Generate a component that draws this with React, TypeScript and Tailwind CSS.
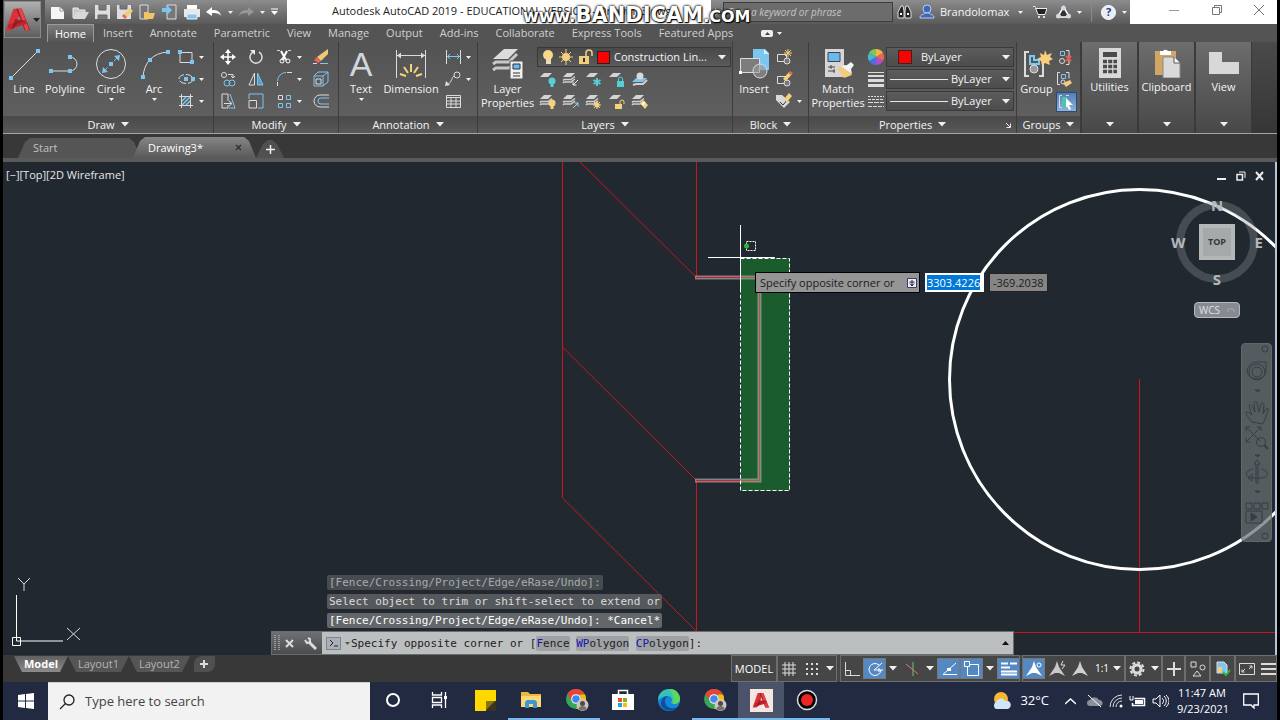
import { useEffect, useRef } from "react";
import type { ReactNode } from "react";

type Kids = { children?: ReactNode };

function Svg({ w = 18, h = 18, children }: Kids & { w?: number; h?: number }) {
  return (
    <svg
      width={w}
      height={h}
      viewBox={`0 0 ${w} ${h}`}
      fill="none"
      stroke="#dcdcdc"
      className="shrink-0"
      aria-hidden="true"
    >
      {children}
    </svg>
  );
}

function Caret() {
  return (
    <Svg w={8} h={5}>
      <path d="M0 0h8L4 4.500z" fill="#f0f0f0" stroke="none" />
    </Svg>
  );
}

function SmallCaret() {
  return (
    <Svg w={5} h={3}>
      <path d="M0 0h5L2.500 3z" fill="#f0f0f0" stroke="none" />
    </Svg>
  );
}

function Nodes({ at }: { at: number[][] }) {
  return (
    <g fill="#7cc6f2" stroke="none">
      {at.map(([x, y]) => (
        <rect key={`${x}-${y}`} x={x - 2} y={y - 2} width="4" height="4" />
      ))}
    </g>
  );
}

function AcadLogo({ size }: { size: number }) {
  return (
    <svg width={size} height={size} viewBox="0 0 30 30" aria-hidden="true">
      <path d="M9 3h9l-8 20-3 3H1z" fill="#d8323a" />
      <path d="M12 3h6l9 23h-6z" fill="#b01622" />
      <path d="M18 3l-4 0 8 23h4z" fill="#e0474c" />
      <path d="M3 20l18-5 3 4-20 6z" fill="#c2242e" />
      <path d="M7 25l4-11 10 2-8 3-4 5z" fill="#8e0f1b" opacity=".7" />
    </svg>
  );
}

/* ---------- ribbon building blocks ---------- */

function Panel({ title, width, corner, children }: Kids & { title: string; width: string; corner?: boolean }) {
  return (
    <section className={`${width} flex shrink-0 flex-col border-r border-[#3c3c3c] bg-gradient-to-b from-[#535353] to-[#626262]`}>
      <div className="flex h-[74px] pt-1">{children}</div>
      <div className="relative flex flex-1 items-center justify-center bg-gradient-to-b from-[#494949] to-[#585858]">
        <button type="button" className="flex items-center gap-1.5 text-[11px] leading-4 text-gray-100">
          {title}
          <Caret />
        </button>
        {corner && (
          <span className="absolute right-1 bottom-1">
            <Svg w={7} h={7}>
              <path d="M1 1l4 4M5.500 1.500v4h-4" stroke="#eee" />
            </Svg>
          </span>
        )}
      </div>
    </section>
  );
}

function BigButton({ label, width, caret, children }: Kids & { label: string; width: string; caret?: boolean }) {
  return (
    <button type="button" className={`${width} flex shrink-0 flex-col items-center text-[11px] leading-[14px] text-gray-100`}>
      <span className="flex h-9 items-center justify-center">{children}</span>
      <span className="whitespace-pre">{label}</span>
      {caret && (
        <span className="mt-0.5">
          <SmallCaret />
        </span>
      )}
    </button>
  );
}

function Tool({ label, caret, children }: Kids & { label: string; caret?: boolean }) {
  return (
    <button type="button" aria-label={label} className="flex h-[22px] items-center gap-1">
      {children}
      {caret && <SmallCaret />}
    </button>
  );
}

function SidePanel({ label, children }: Kids & { label: string }) {
  return (
    <button
      type="button"
      className="flex w-[57px] shrink-0 flex-col items-center border-x border-[#3a3a3a] bg-gradient-to-b from-[#6d6d6d] to-[#484848] pt-1 pb-1.5 text-[11px] leading-[14px] text-gray-100"
    >
      <span className="flex h-[34px] items-center">{children}</span>
      {label}
      <span className="mt-auto">
        <Caret />
      </span>
    </button>
  );
}

const sheet = (y: number) => `M5 ${y}h8l-4 4h-8z`;

function LayerIcon({ stack, children }: Kids & { stack?: boolean }) {
  return (
    <Svg>
      {stack && <path d="M1 9.500l1-1h7l4-3M1 12l1-1h7l4-3" stroke="#d0d0d0" strokeWidth="1.500" />}
      <path d={sheet(2)} fill="#d4d4d4" stroke="none" />
      {children}
    </Svg>
  );
}

function Bulb({ color }: { color: string }) {
  return (
    <g fill={color} stroke="none">
      <circle cx="13" cy="10" r="3.500" />
      <path d="M11.500 13h3v3h-3z" />
    </g>
  );
}

function DrawPanel() {
  return (
    <Panel title="Draw" width="w-[211px]">
      <BigButton label="Line" width="w-[42px]">
        <Svg w={32} h={32}>
          <path d="M3 30L30 3" />
          <Nodes at={[[3, 30], [30, 3]]} />
        </Svg>
      </BigButton>
      <BigButton label="Polyline" width="w-[40px]">
        <Svg w={32} h={32}>
          <path d="M2 23h19a7 7 0 0 0 0-14" />
          <Nodes at={[[2, 23], [21, 23], [21, 9]]} />
        </Svg>
      </BigButton>
      <BigButton label="Circle" width="w-[52px]" caret>
        <Svg w={32} h={32}>
          <circle cx="16" cy="16" r="14.500" />
          <path d="M9 23L23 9" stroke="#7cc6f2" strokeDasharray="5 2" />
          <path d="M7 25l1-6 5 5zM25 7l-1 6-5-5z" fill="#7cc6f2" stroke="none" />
          <Nodes at={[[16, 16]]} />
        </Svg>
      </BigButton>
      <BigButton label="Arc" width="w-[34px]" caret>
        <Svg w={32} h={32}>
          <path d="M5 29C6 15 14 5 30 4" />
          <Nodes at={[[5, 29], [12, 12], [30, 4]]} />
        </Svg>
      </BigButton>
      <div className="flex flex-col pl-1.5">
        <Tool label="Rectangle" caret>
          <Svg>
            <path d="M3 4.500h12v10H3z" />
            <Nodes at={[[3, 4], [15, 14]]} />
          </Svg>
        </Tool>
        <Tool label="Ellipse" caret>
          <Svg>
            <ellipse cx="9" cy="9" rx="7" ry="4.500" strokeDasharray="7 2" />
            <Nodes at={[[9, 9], [16, 9]]} />
          </Svg>
        </Tool>
        <Tool label="Hatch" caret>
          <Svg>
            <path d="M4.500 2v14M13.500 2v14M2 4.500h14M2 13.500h14" />
            <path d="M5 9l4-4M5 13l8-8M9 13l4-4" stroke="#7cc6f2" strokeWidth="1.500" />
          </Svg>
        </Tool>
      </div>
    </Panel>
  );
}

function ModifyPanel() {
  return (
    <Panel title="Modify" width="w-[125px]">
      <div className="flex flex-col pl-[5px]">
        <Tool label="Move">
          <Svg>
            <path d="M9 2v14M2 9h14" strokeWidth="1.500" stroke="#fff" />
            <path d="M9 1l3 4H6zM9 17l3-4H6zM1 9l4-3v6zM17 9l-4-3v6z" fill="#fff" stroke="none" />
          </Svg>
        </Tool>
        <Tool label="Copy">
          <Svg>
            <circle cx="5" cy="5" r="2.500" />
            <path d="M9 4.500h5v3M12 6l2 2 2-2" />
            <circle cx="8" cy="13" r="3" stroke="#7cc6f2" />
            <circle cx="13" cy="13" r="3" stroke="#7cc6f2" />
          </Svg>
        </Tool>
        <Tool label="Stretch">
          <Svg>
            <path d="M9 9V2H3v14h6v-3M5 11.500h7M10 9l3 2.500-3 2.500" />
            <path d="M11 2l5 14h-6" stroke="#7cc6f2" />
          </Svg>
        </Tool>
      </div>
      <div className="flex flex-col pl-2.5">
        <Tool label="Rotate">
          <Svg>
            <path d="M12 4a6 6 0 1 1-6 0" strokeWidth="1.500" />
            <path d="M3 2h5v5z" fill="#eee" stroke="none" />
          </Svg>
        </Tool>
        <Tool label="Mirror">
          <Svg>
            <path d="M7.500 3v12H2z" />
            <path d="M10.500 3v12H16z" stroke="#7cc6f2" fill="#5b9cc8" />
          </Svg>
        </Tool>
        <Tool label="Scale">
          <Svg>
            <path d="M2 7V2h14v14h-5" stroke="#7cc6f2" />
            <path d="M2 8.500h7.500V16H2z" />
          </Svg>
        </Tool>
      </div>
      <div className="flex flex-col pl-2.5">
        <Tool label="Trim" caret>
          <Svg>
            <path d="M2 2.500h4M13 2.500h4" strokeDasharray="3 1" />
            <path d="M6 3l5 9M12 3l-5 9" stroke="#fff" strokeWidth="2" />
            <circle cx="7" cy="13" r="2" stroke="#fff" />
            <circle cx="13" cy="13" r="2" stroke="#fff" />
          </Svg>
        </Tool>
        <Tool label="Fillet" caret>
          <Svg>
            <path d="M2.500 16v-4" />
            <path d="M2.500 11C3 6 6 3 11 2.500" stroke="#7cc6f2" />
            <path d="M12 2.500h5" />
          </Svg>
        </Tool>
        <Tool label="Array" caret>
          <Svg>
            <path d="M3.500 3.500h4v4h-4z" />
            <path d="M11.500 3.500h4v4h-4zM3.500 11.500h4v4h-4zM11.500 11.500h4v4h-4z" stroke="#7cc6f2" />
          </Svg>
        </Tool>
      </div>
      <div className="flex flex-col pl-2.5">
        <Tool label="Erase">
          <Svg>
            <path d="M16 1v5l-7 7-4-4z" fill="#f2c878" stroke="none" />
            <path d="M5 9l4 4-3 2-4-3z" fill="#e8655c" stroke="none" />
            <path d="M1 15.500h4" />
            <path d="M8 15.500h8" stroke="#7cc6f2" />
          </Svg>
        </Tool>
        <Tool label="Explode">
          <Svg>
            <path d="M2 6h9v10H2zM2 6l4-4h10v10l-5 4M11 6l5-4" stroke="#7cc6f2" />
            <path d="M4 9h5v5H4z" />
          </Svg>
        </Tool>
        <Tool label="Offset">
          <Svg>
            <path d="M17 3H8a6 6 0 0 0 0 12h9" />
            <path d="M17 6H9a3 3 0 0 0 0 6h8" stroke="#7cc6f2" />
          </Svg>
        </Tool>
      </div>
    </Panel>
  );
}

function AnnotationPanel() {
  return (
    <Panel title="Annotation" width="w-[139px]">
      <BigButton label="Text" width="w-[44px]" caret>
        <span className="font-['Liberation_Sans'] text-[34px] leading-none text-gray-300">A</span>
      </BigButton>
      <BigButton label="Dimension" width="w-[56px]">
        <Svg w={32} h={32}>
          <path d="M1.500 2v28M30.500 2v28M2 7.500h28" />
          <path d="M2 7.500l4-3v6zM30 7.500l-4-3v6z" fill="#dcdcdc" stroke="none" />
          <path d="M16 16v8M9 19l4 6M23 19l-4 6M5 26l6 2M27 26l-6 2" stroke="#f5d37c" strokeWidth="2" />
        </Svg>
      </BigButton>
      <div className="flex flex-col pl-[5px]">
        <Tool label="Linear" caret>
          <Svg>
            <path d="M2.500 2v14M16.500 2v14" />
            <path d="M3 8.500h13M6 6L3.500 8.500 6 11M13 6l2.500 2.500L13 11" stroke="#7cc6f2" />
          </Svg>
        </Tool>
        <Tool label="Leader" caret>
          <Svg>
            <circle cx="13" cy="5" r="3" />
            <path d="M10 6C7 8 9 11 3 15" />
            <path d="M1 16l1-5 4 4z" fill="#ddd" stroke="none" />
          </Svg>
        </Tool>
        <Tool label="Table">
          <Svg>
            <path d="M2.500 3.500h14v12h-14zM2.500 5.500h14M2.500 9h14M2.500 12h14M7 5v10M12 5v10" />
          </Svg>
        </Tool>
      </div>
    </Panel>
  );
}

function LayersPanel() {
  return (
    <Panel title="Layers" width="w-[255px]">
      <BigButton label={"Layer\nProperties"} width="w-[59px]">
        <Svg w={32} h={32}>
          <path d="M1 16l3-2h13l8-8M1 22l3-2h13l2-2" strokeWidth="3" stroke="#c8c8c8" />
          <path d="M12 1h14L16 11H1z" fill="#dcdcdc" stroke="none" />
          <path d="M18 13h13v18H18z" fill="#f0f0f0" stroke="#555" />
          <path d="M21 16h7v5h-7z" fill="#6cb8f0" stroke="#333" />
          <path d="M21 25h7M21 28h7" stroke="#333" />
        </Svg>
      </BigButton>
      <div className="flex min-w-0 flex-1 flex-col pr-px">
        <label className="mt-px flex h-5 w-full items-center gap-1 border border-[#383838] bg-gradient-to-b from-[#494949] to-[#5a5a5a] px-1">
          <Svg w={13} h={16}>
            <circle cx="6" cy="6" r="5" fill="#f8d98a" stroke="none" />
            <path d="M4 10h5v5H4z" fill="#e8dcb8" stroke="none" />
          </Svg>
          <Svg w={15} h={16}>
            <circle cx="7" cy="8" r="4" fill="#f8cf7c" stroke="none" />
            <path d="M7 0v16M0 8h14M2 3l10 10M12 3L2 13" stroke="#f8cf7c" />
          </Svg>
          <Svg w={15} h={16}>
            <path d="M1 7h10v8H1z" fill="#f2cd7e" stroke="none" />
            <path d="M8 7V4a3 3 0 0 1 6 0v3" stroke="#f2cd7e" strokeWidth="1.500" />
            <path d="M6 9v4" stroke="#333" strokeWidth="2" />
          </Svg>
          <span className="h-[13px] w-[13px] shrink-0 border border-[#222] bg-[#ff0000]" />
          <select
            aria-label="Layer"
            className="min-w-0 flex-1 appearance-none truncate bg-transparent text-[11px] text-gray-100"
          >
            <option>Construction Lin...</option>
          </select>
          <Caret />
        </label>
        <div className="mt-0.5 flex gap-[5px] pl-0.5">
          <Tool label="Off"><LayerIcon><Bulb color="#54cfd8" /></LayerIcon></Tool>
          <Tool label="Isolate"><LayerIcon stack><path d="M16 9l-5 5M11 10.500V14h3.500" stroke="#eee" /></LayerIcon></Tool>
          <Tool label="Freeze">
            <LayerIcon><path d="M12 7v8M8.500 9l7 4M15.500 9l-7 4" stroke="#54cfd8" strokeWidth="2" /></LayerIcon>
          </Tool>
          <Tool label="Lock">
            <LayerIcon>
              <path d="M9 10h7v6H9z" fill="#54cfd8" stroke="none" />
              <path d="M10.500 10V8a2 2 0 0 1 4 0v2" stroke="#54cfd8" />
            </LayerIcon>
          </Tool>
          <Tool label="Make Current">
            <Svg>
              <path d="M2 14l3-1h7l4-4" stroke="#d0d0d0" strokeWidth="2" />
              <path d="M5 7h11l-4 4H1z" fill="#7cc6f2" stroke="none" />
              <circle cx="9" cy="5" r="3.500" fill="#d8d8d8" stroke="none" />
            </Svg>
          </Tool>
        </div>
        <div className="flex gap-[5px] pl-0.5">
          <Tool label="Turn All On"><LayerIcon stack><Bulb color="#f5d37c" /></LayerIcon></Tool>
          <Tool label="Unisolate"><LayerIcon stack><path d="M11 15l5-5M12.500 10H16v3.500" stroke="#9fd4f5" /></LayerIcon></Tool>
          <Tool label="Thaw All">
            <LayerIcon stack>
              <circle cx="12" cy="12" r="2.500" fill="#f5d37c" stroke="none" />
              <path d="M12 8v8M8 12h8M9 9l6 6M15 9l-6 6" stroke="#f5d37c" />
            </LayerIcon>
          </Tool>
          <Tool label="Unlock">
            <LayerIcon>
              <path d="M7 11h7v5H7z" fill="#f5d37c" stroke="none" />
              <path d="M12 11V9a2 2 0 0 1 4 0v2" stroke="#f5d37c" />
            </LayerIcon>
          </Tool>
          <Tool label="Match Layer">
            <LayerIcon stack>
              <path d="M9 10l3-3 5 5-3 4z" fill="#f5d37c" stroke="none" />
              <path d="M11 12l3-3" stroke="#fff" strokeWidth="2" />
            </LayerIcon>
          </Tool>
        </div>
      </div>
    </Panel>
  );
}

function BlockPanel() {
  return (
    <Panel title="Block" width="w-[76px]">
      <BigButton label="Insert" width="w-[42px]">
        <Svg w={32} h={32}>
          <path d="M15 1h12l4 4v17H15z" fill="#7cc6f2" stroke="none" />
          <path d="M26 1v5h5z" fill="#d8eefb" stroke="none" />
          <path d="M2.500 10.500h19v14h-19z" fill="#7d7d7d" />
          <circle cx="22" cy="23" r="7" fill="#999" fillOpacity=".6" />
          <path d="M1 23h3v3H1z" fill="#fff" stroke="none" />
        </Svg>
      </BigButton>
      <div className="flex flex-col">
        <Tool label="Create Block">
          <Svg>
            <path d="M2.500 6.500h9v7h-9z" />
            <circle cx="12" cy="13" r="3" fill="#777" />
            <path d="M13 1v8M9 5h8M10 2l6 6M16 2l-6 6" stroke="#f5d37c" />
          </Svg>
        </Tool>
        <Tool label="Edit Block">
          <Svg>
            <path d="M2.500 6.500h9v7h-9z" />
            <circle cx="12" cy="13" r="3" fill="#777" />
            <path d="M8 9l6-7 3 2-6 7z" fill="#f5d37c" stroke="none" />
            <path d="M13 3l2-2 3 2-2 2z" fill="#e8655c" stroke="none" />
          </Svg>
        </Tool>
        <Tool label="Edit Attributes" caret>
          <Svg>
            <path d="M1 3h6l8 7-6 6-8-8z" fill="#d8d8d8" stroke="none" />
            <path d="M5 10l3 3 5-6" stroke="#333" />
            <path d="M9 7l5-6 3 3-5 6z" fill="#f5d37c" stroke="none" />
          </Svg>
        </Tool>
      </div>
    </Panel>
  );
}

function PropertySelect({ label, line }: { label: string; line?: boolean }) {
  return (
    <label className="flex h-5 w-full items-center gap-[3px] border border-[#3a3a3a] bg-gradient-to-b from-[#5c5c5c] to-[#4c4c4c] px-[3px]">
      {line ? (
        <span className="h-px w-[58px] shrink-0 bg-gray-200" />
      ) : (
        <span className="mr-1.5 ml-2 h-[14px] w-[14px] shrink-0 border border-[#2a2a2a] bg-[#ff0000]" />
      )}
      <select aria-label={label} className="min-w-0 flex-1 appearance-none bg-transparent text-[11px] text-gray-100">
        <option>ByLayer</option>
      </select>
      <Caret />
    </label>
  );
}

function PropertiesPanel() {
  return (
    <Panel title="Properties" width="w-[208px]" corner>
      <BigButton label={"Match\nProperties"} width="w-[58px]">
        <Svg w={32} h={32}>
          <path d="M3 1h19v28H3z" fill="#d6d6d6" stroke="none" />
          <path d="M6 4.500h12v9H6z" fill="#6cb8f0" stroke="#444" />
          <path d="M6 19h7M6 23h7M9 17v4M12 21v4" stroke="#444" />
          <path d="M15 20l7 10 8-3-7-10z" fill="#f2cd7e" stroke="none" />
          <path d="M19 18l6-1 4-3 3 3-3 4 1 5z" fill="#f4f4f4" stroke="none" />
        </Svg>
      </BigButton>
      <div className="flex w-[19px] shrink-0 flex-col">
        <Tool label="Color">
          <Svg>
            <g stroke="none">
              <path d="M9 9V1a8 8 0 0 1 7 4z" fill="#f2b544" />
              <path d="M9 9l7-4a8 8 0 0 1 0 8z" fill="#e9645a" />
              <path d="M9 9l7 4a8 8 0 0 1-7 4z" fill="#b14fc4" />
              <path d="M9 9v8a8 8 0 0 1-7-4z" fill="#4a6fe0" />
              <path d="M9 9l-7 4a8 8 0 0 1 0-8z" fill="#45b8d8" />
              <path d="M9 9L2 5a8 8 0 0 1 7-4z" fill="#7cc659" />
            </g>
          </Svg>
        </Tool>
        <Tool label="Lineweight">
          <Svg>
            <path d="M1 2.500h16" />
            <path d="M1 6h16" strokeWidth="2" />
            <path d="M1 10.500h16M1 15.500h16" strokeWidth="3" />
          </Svg>
        </Tool>
        <Tool label="Linetype">
          <Svg>
            <path d="M1 4.500h16" strokeDasharray="2 1" />
            <path d="M1 7.500h16" strokeDasharray="3 1" />
            <path d="M1 10.500h16" strokeDasharray="5 1" />
            <path d="M1 14.500h16" strokeDasharray="4 1" />
          </Svg>
        </Tool>
      </div>
      <div className="flex min-w-0 flex-1 flex-col gap-0.5 pt-px pr-0.5">
        <PropertySelect label="Object color" />
        <PropertySelect label="Object lineweight" line />
        <PropertySelect label="Object linetype" line />
      </div>
    </Panel>
  );
}

function GroupsPanel() {
  return (
    <Panel title="Groups" width="w-[64px]">
      <BigButton label="Group" width="w-[39px]">
        <Svg w={32} h={32}>
          <path d="M8 4H4v24h4M18 28h4V12" strokeWidth="2" />
          <path d="M9 8h4v4h5v4H9z" stroke="#7cc6f2" strokeWidth="2" />
          <circle cx="13" cy="21" r="4" fill="#999" />
          <path d="M24 2l2 5 5-2-2 4 3 2-4 2 1 4-5-2-3 3-1-5-4-2 4-2-1-4 4 2z" fill="#f8cf7c" stroke="none" />
        </Svg>
      </BigButton>
      <div className="flex flex-col">
        <Tool label="Ungroup">
          <Svg>
            <path d="M4.500 3.500h4v4h-4z" stroke="#7cc6f2" />
            <circle cx="6" cy="13" r="2.500" />
            <path d="M10 2.500h3v14h-3" />
            <path d="M10 8l5 5M15 8l-5 5" stroke="#f0574f" strokeWidth="2" />
          </Svg>
        </Tool>
        <Tool label="Group Edit">
          <Svg>
            <path d="M4 2.500H1.500v12H4M10 2.500h3v6" />
            <path d="M5.500 4.500h4v4h-4z" stroke="#7cc6f2" />
            <circle cx="7" cy="12" r="2" />
            <path d="M7 13l7-3 2 3-6 4z" fill="#f2cd7e" stroke="none" />
          </Svg>
        </Tool>
        <button
          type="button"
          aria-label="Group Selection"
          className="mt-0.5 flex h-5 w-[21px] items-center justify-center border border-[#2c4a78] bg-gradient-to-b from-[#4f80b8] to-[#8fb2d8]"
        >
          <Svg>
            <path d="M4 2.500H1.500v12H4M8 2.500h3" />
            <path d="M4 4h5v10H4z" fill="#4fc4a8" stroke="none" />
            <path d="M8 5l7 7h-4l2 4-2 1-2-4-1 2z" fill="#fff" stroke="none" />
          </Svg>
        </button>
      </div>
    </Panel>
  );
}

function Ribbon() {
  return (
    <div className="flex h-[92px] border-b border-[#a4a4a4] bg-gradient-to-b from-[#4a4a4a] to-[#363636]">
      <DrawPanel />
      <ModifyPanel />
      <AnnotationPanel />
      <LayersPanel />
      <BlockPanel />
      <PropertiesPanel />
      <GroupsPanel />
      <SidePanel label="Utilities">
        <Svg w={24} h={30}>
          <path d="M1 0h22v30H1z" fill="#d8d8d8" stroke="none" />
          <path d="M5 4h14v5H5z" fill="#4a4a4a" stroke="none" />
          <path d="M5 13.500h14M5 18.500h14M5 23.500h14" stroke="#4a4a4a" strokeWidth="3.500" strokeDasharray="4 1.200" />
        </Svg>
      </SidePanel>
      <SidePanel label="Clipboard">
        <Svg w={28} h={30}>
          <path d="M2 3h21v24H2z" fill="#d3a565" stroke="none" />
          <path d="M7 3h3a3 3 0 0 1 5 0h3v4H7z" fill="#fff" stroke="none" />
          <path d="M10 9h11l6 6v15H10z" fill="#dadada" stroke="#888" />
          <path d="M21 9v6h6" fill="#fff" stroke="#555" />
        </Svg>
      </SidePanel>
      <SidePanel label="View">
        <Svg w={32} h={30}>
          <path d="M1 4h13v10h17v12H1z" fill="#d8d8d8" stroke="none" />
        </Svg>
      </SidePanel>
    </div>
  );
}

/* ---------- title bar ---------- */

const ribbonTabs = [
  "Insert",
  "Annotate",
  "Parametric",
  "View",
  "Manage",
  "Output",
  "Add-ins",
  "Collaborate",
  "Express Tools",
  "Featured Apps",
];

function QuickAccess() {
  return (
    <div className="flex w-[242px] shrink-0 items-center gap-[5px] bg-gradient-to-b from-[#8c8c8c] to-[#5a5a5a] pl-1">
      <button type="button" aria-label="New">
        <Svg w={18} h={16}><path d="M2 3h9l4 4v8H2z" fill="#f6f6f6" stroke="none" /><path d="M11 3v4h4" stroke="#999" /></Svg>
      </button>
      <button type="button" aria-label="Open">
        <Svg w={17} h={16}><path d="M1 14V4h5l1 2h6v2" fill="#c8c8c8" stroke="#eee" /><path d="M4 8h13l-4 7H1z" fill="#d8d8d8" stroke="none" /></Svg>
      </button>
      <button type="button" aria-label="Save">
        <Svg w={17} h={16}><path d="M1 1h15v14H1z" fill="#dedede" stroke="none" /><path d="M5 1v5h7V1M4 15v-4h9v4" fill="#777" stroke="#666" /></Svg>
      </button>
      <button type="button" aria-label="Save As">
        <Svg w={17} h={16}>
          <path d="M1 1h14v14H1z" fill="#dedede" stroke="none" />
          <path d="M4 1v4h7V1" fill="#777" stroke="#666" />
          <path d="M7 11l7-7 3 3-7 7z" fill="#f2cd7e" stroke="none" />
          <path d="M6 12l2-2 3 3-2 2z" fill="#e8655c" stroke="none" />
        </Svg>
      </button>
      <button type="button" aria-label="Open from mobile">
        <Svg w={18} h={16}><path d="M2 1h8v14H2z" fill="#777" /><path d="M6 8h4l1 1h6l-2 6H6z" fill="#f2c463" stroke="none" /></Svg>
      </button>
      <button type="button" aria-label="Save to mobile">
        <Svg w={17} h={16}><path d="M6 1h9v14H6z" fill="#777" /><path d="M1 4h5V1l5 5-5 5V8H1z" fill="#7cc6f2" stroke="none" /></Svg>
      </button>
      <button type="button" aria-label="Plot">
        <Svg w={18} h={16}>
          <path d="M4 1h10v4H4z" fill="#fff" stroke="none" />
          <path d="M1 5h16v8H1z" fill="#e8e8e8" stroke="none" />
          <path d="M4 10h10v5H4z" fill="#7cc6f2" stroke="#eee" />
        </Svg>
      </button>
      <button type="button" aria-label="Undo" className="flex items-center gap-1.5">
        <Svg w={16} h={14}><path d="M0 7l6-5v3c5 0 8 1 9 6-2-3-5-3-9-3v3z" fill="#fff" stroke="none" /></Svg>
        <SmallCaret />
      </button>
      <button type="button" aria-label="Redo" className="flex items-center gap-1.5">
        <Svg w={16} h={14}><path d="M16 7l-6-5v3c-5 0-8 1-9 6 2-3 5-3 9-3v3z" fill="#989898" stroke="none" /></Svg>
        <SmallCaret />
      </button>
      <button type="button" aria-label="Customize">
        <Svg w={9} h={8}><path d="M1 1h7" stroke="#fff" /><path d="M1 3h7L4.500 7z" fill="#fff" stroke="none" /></Svg>
      </button>
    </div>
  );
}

function TitleBar() {
  return (
    <header className="relative flex bg-[#545454]">
      <button
        type="button"
        aria-label="Application menu"
        className="mt-px mr-1 ml-px flex h-[37px] w-[37px] shrink-0 items-center border border-[#8a8a8a] bg-gradient-to-b from-[#b0b0b0] to-[#5e5e5e]"
      >
        <AcadLogo size={28} />
        <Svg w={7} h={4}><path d="M0 0h7L3.500 4z" fill="#222" stroke="none" /></Svg>
      </button>
      <div className="flex min-w-0 flex-1 flex-col">
        <div className="flex h-6">
          <QuickAccess />
          <h1 className="min-w-0 flex-1 overflow-hidden bg-white pl-[45px] text-[11px] leading-[22px] whitespace-nowrap text-[#222]">
            Autodesk AutoCAD 2019 - EDUCATIONAL VERSION - Drawing3.dwg
          </h1>
          <div className="flex w-[419px] shrink-0 items-center bg-gradient-to-b from-[#8c8c8c] to-[#5a5a5a]">
            <span className="flex w-3 justify-center">
              <Svg w={4} h={8}><path d="M0 0l4 4-4 4z" fill="#eee" stroke="none" /></Svg>
            </span>
            <input
              aria-label="Search help"
              placeholder="Type a keyword or phrase"
              className="h-5 w-[170px] border border-[#3c3c3c] bg-[#6c6c6c] px-1 text-[10px] text-gray-200 italic placeholder:text-[#c4c4c4]"
            />
            <button type="button" aria-label="Search" className="ml-1">
              <Svg w={15} h={16}>
                <path d="M1 14V8l3-6h2l1 5v7zM14 14V8l-3-6H9L8 7v7z" fill="#222" stroke="#ddd" />
                <path d="M3 10h2M10 10h2" stroke="#fff" strokeWidth="2" />
              </Svg>
            </button>
            <button type="button" className="ml-[7px] flex items-center gap-[5px] text-[11px] text-gray-100">
              <Svg w={16} h={16}>
                <circle cx="8" cy="5" r="4" fill="#3f68b8" stroke="#b8cdf0" />
                <path d="M1 14c0-4 4-3 5-5h4c1 2 5 1 5 5z" fill="#3f68b8" stroke="#b8cdf0" />
              </Svg>
              Brandolomax
            </button>
            <span className="ml-auto flex items-center gap-[9px] pr-[3px]">
              <SmallCaret />
              <Svg w={15} h={14}>
                <path d="M1 1.500h2l3 8h7l2-6H4" fill="#222" stroke="#eee" />
                <path d="M6 12h2M11 12h2" strokeWidth="2" />
              </Svg>
              <span className="flex items-center gap-1.5">
                <Svg w={15} h={14}>
                  <path d="M7.500 2l6 10h-12z" fill="#333" stroke="#fff" strokeWidth="1.500" />
                  <circle cx="7.500" cy="3" r="2" fill="#ccd8f0" />
                  <circle cx="2.500" cy="11" r="2" fill="#ccd8f0" />
                  <circle cx="12.500" cy="11" r="2" fill="#ccd8f0" />
                </Svg>
                <SmallCaret />
              </span>
              <span className="h-5 w-px bg-[#8a8a8a]" />
              <button type="button" aria-label="Help" className="flex items-center gap-1.5">
                <span className="flex h-[15px] w-[15px] items-center justify-center rounded-full border border-white bg-[#e8edf8] text-[11px] leading-3 font-bold text-[#233a80]">
                  ?
                </span>
                <SmallCaret />
              </button>
            </span>
          </div>
          <div className="flex w-[147px] shrink-0 items-center justify-between bg-white pr-[13px] pb-1 pl-[39px]">
            <button type="button" aria-label="Minimize"><Svg w={10} h={10}><path d="M0 5.500h10" stroke="#999" /></Svg></button>
            <button type="button" aria-label="Restore">
              <Svg w={10} h={10}><path d="M.5 2.500h7v7h-7zM2.500 2.500v-2h7v7h-2" stroke="#777" /></Svg>
            </button>
            <button type="button" aria-label="Close"><Svg w={10} h={10}><path d="M0 0l10 10M10 0L0 10" stroke="#777" /></Svg></button>
          </div>
        </div>
        <nav className="flex h-[18px] pl-0.5 text-[11px] leading-[17px] whitespace-nowrap text-[#d0d0d0]">
          <a href="#home" className="w-[47px] border border-b-0 border-[#9a9a9a] bg-gradient-to-b from-[#7c7c7c] to-[#545454] text-center text-white">
            Home
          </a>
          {ribbonTabs.map((tab) => (
            <a key={tab} href="#ribbon" className="pr-2 pl-[9px]">
              {tab}
            </a>
          ))}
          <button type="button" aria-label="Ribbon display" className="ml-5 flex items-center gap-1">
            <span className="flex h-[7px] w-3 items-center justify-center rounded-xs bg-[#eee]">
              <Svg w={5} h={3}><path d="M0 3h5L2.500 0z" fill="#444" stroke="none" /></Svg>
            </span>
            <SmallCaret />
          </button>
        </nav>
      </div>
      <p className="absolute top-0.5 left-[520px] flex items-baseline font-['DejaVu_Sans'] text-[17px] leading-[26px] font-bold text-white [text-shadow:0_0_3px_#000,0_0_2px_#000,1px_1px_1px_#000]">
        www.
        <span className="text-[21px]">BANDICAM</span>
        <span className="text-[16px]">.COM</span>
      </p>
    </header>
  );
}

function FileTabs() {
  const shape = "[clip-path:polygon(12px_0,calc(100%-12px)_0,calc(100%-7px)_4px,100%_100%,0_100%,7px_4px)]";
  return (
    <nav className="flex h-7 items-end border-b-4 border-[#5a5a5a] bg-[#383838] pl-[15px] text-[11px] leading-5 text-[#c0c0c0]">
      <a href="#start" className={`${shape} w-[123px] bg-[#555] pl-[15px]`}>
        Start
      </a>
      <div className={`${shape} -ml-2 flex h-[21px] w-[123px] items-center justify-between bg-gradient-to-b from-[#868686] to-[#5a5a5a] pr-[14px] pl-[15px]`}>
        <a href="#drawing" className="text-white">
          Drawing3*
        </a>
        <button type="button" aria-label="Close drawing">
          <Svg w={7} h={7}><path d="M1 1l5 5M6 1L1 6" stroke="#333" strokeWidth="1.500" /></Svg>
        </button>
      </div>
      <button type="button" aria-label="New tab" className={`${shape} flex h-[18px] w-7 items-center justify-center bg-[#505050]`}>
        <Svg w={9} h={9}><path d="M4.500 0v9M0 4.500h9" stroke="#eee" strokeWidth="1.500" /></Svg>
      </button>
    </nav>
  );
}

/* ---------- drawing area ---------- */

function Drawing() {
  return (
    <svg
      className="absolute inset-0 h-full w-full"
      viewBox="3 162 1272 493"
      preserveAspectRatio="xMinYMin slice"
      fill="none"
      stroke="#c8161c"
      aria-hidden="true"
    >
      <path d="M562.500 162v336L697 632M562.500 347L696 480M580 162l116 115M696.500 162v115M696.500 480v152M696 632.500h581M1139.500 379v253" />
      <circle cx="1139.500" cy="379.500" r="190" stroke="#fff" strokeWidth="3" />
      <path d="M741 258h49v233h-49z" fill="#1a5c2e" stroke="none" />
      <path d="M695 277.500h64.500v203H695" stroke="#a8a8a8" strokeOpacity=".7" strokeWidth="4" />
      <path d="M696 277.500h45M696 480.500h45" stroke="#d81e28" />
      <path d="M741 277.500h18.500v203H741" stroke="#b8583a" />
      <path d="M740.500 258.500h49v232h-49z" stroke="#fff" strokeDasharray="4 2" />
      <path d="M708 257.500h67M740.500 225v67" stroke="#fff" />
      <path d="M746.500 241.500h9v9h-9z" stroke="#fff" strokeDasharray="2 1" />
      <circle cx="746.500" cy="246" r="2.500" fill="#28b834" stroke="none" />
      <path d="M16.500 595v46H63" stroke="#fff" />
      <path d="M12.500 637.500h8v8h-8z" stroke="#fff" />
      <path d="M18 578l6 6M30 578l-6 6v7M67 628l13 12M80 628l-13 12" stroke="#d8d8d8" />
    </svg>
  );
}

function ViewCube() {
  return (
    <div className="absolute top-[35px] right-3 flex w-[92px] flex-col items-center text-[15px] leading-4 font-bold text-[#b4b8ba]">
      <div className="relative flex h-[90px] w-[92px] items-center justify-center">
        <span className="absolute h-[82px] w-[82px] rounded-full border-8 border-[#8a9094]/35" />
        <span className="absolute top-0">N</span>
        <span className="absolute left-0">W</span>
        <span className="absolute right-0">E</span>
        <span className="absolute bottom-0">S</span>
        <button type="button" className="relative flex h-9 w-9 items-center justify-center border-4 border-[#b4b7b8] bg-[#a6a9aa] text-[9px] text-[#34393c]">
          TOP
        </button>
      </div>
      <button type="button" className="mt-[15px] flex h-4 w-[46px] items-center justify-between rounded border border-[#b4b7be] bg-[#878b91] px-1 text-[10px] font-normal text-[#e0e0e4]">
        WCS
        <Svg w={8} h={5}><path d="M1 4V1h6v3" stroke="#a8a8b0" /></Svg>
      </button>
    </div>
  );
}

function NavBar() {
  return (
    <aside className="absolute top-[181px] right-[3px] rounded border border-[#686e72] bg-[#697074]/80 opacity-90">
      <svg width="29" height="197" viewBox="0 0 29 197" fill="none" stroke="#3a4145" aria-hidden="true">
        <circle cx="23" cy="5" r="3" />
        <path d="M5 28a10 10 0 0 1 10-10h9v10a10 10 0 0 1-19 0z" />
        <circle cx="15" cy="28" r="8" />
        <circle cx="15" cy="28" r="5" />
        <path d="M13 46h5l-2 2zM13 111h5l-2 2zM13 147h5l-2 2z" fill="#3a4145" />
        <path d="M10 78c-3-4-6-7-6-9s3-1 6 2l-3-9c0-2 2-2 3 0l3 6-1-9c0-2 3-2 3 0l2 9 2-8c1-2 3-1 3 1l-1 9 3-5c2-1 3 0 2 2l-3 8c-1 3-2 4-2 5z" />
        <path d="M5 84l13 13M18 84L5 97M4 87v-4h4M15 83h4v4M4 94v4h4" />
        <circle cx="19" cy="98" r="4.500" />
        <path d="M22 101l4 4" strokeWidth="2" />
        <path d="M14 139v-19h-2l3-4 3 4h-2v19zM11 125c-9 2-9 8 0 9h8c9-1 8-8 0-9M10 130v7l-4-3z" />
        <path d="M4 159h6v6H4zM12 159h6v6h-6zM20 159h6v6h-6zM4 167h16v12H4z" />
        <path d="M9 169l6 4-6 4z" fill="#3a4145" />
        <circle cx="23" cy="192" r="3" />
      </svg>
    </aside>
  );
}

function DynamicInput() {
  const coord = useRef<HTMLInputElement>(null);

  useEffect(() => {
    coord.current?.focus();
    coord.current?.select();
  }, []);

  return (
    <div className="absolute top-[110px] left-[752px] flex items-center gap-[5px] text-[11px] leading-[18px] text-[#202020]">
      <div className="flex h-[21px] w-[165px] items-center justify-between border border-black bg-[#959595] pr-0.5 pl-1 text-[#202020]">
        Specify opposite corner or
        <Svg w={10} h={10}>
          <path d="M.5.500h9v9h-9z" fill="#eee" stroke="#333a80" />
          <path d="M5 2v6M3 5.500L5 8l2-2.500M2.500 4h5" stroke="#222" />
        </Svg>
      </div>
      <input
        ref={coord}
        aria-label="X coordinate"
        defaultValue="3303.4226"
        className="h-[19px] w-[59px] bg-white px-0.5 text-[11px] outline-none selection:bg-[#0078d7] selection:text-white"
      />
      <input
        aria-label="Y coordinate"
        defaultValue="-369.2038"
        className="h-[19px] w-[59px] border border-[#222] bg-[#858585] px-[3px] text-[11px]"
      />
    </div>
  );
}

const history = [
  { text: "[Fence/Crossing/Project/Edge/eRase/Undo]:", tone: "text-[#a8abad] bg-[#474c50]" },
  { text: "Select object to trim or shift-select to extend or", tone: "text-[#dcdcdc] bg-[#55595c]" },
  { text: "[Fence/Crossing/Project/Edge/eRase/Undo]: *Cancel*", tone: "text-white bg-[#63676a]" },
];

function CommandOption({ hot, rest }: { hot: string; rest: string }) {
  return (
    <button type="button" className="rounded-xs bg-[#9ea2a5]">
      <span className="text-[#1616b0]">{hot}</span>
      {rest}
    </button>
  );
}

function CommandLine() {
  return (
    <div className="absolute right-[261px] bottom-0 left-[268px] font-['DejaVu_Sans_Mono'] text-[11px] leading-[15px]">
      <div className="flex flex-col items-start gap-1 pb-[3px] pl-14">
        {history.map((line, i) => (
          <p key={i} className={`${line.tone} rounded-xs px-0.5 whitespace-pre`}>
            {line.text}
          </p>
        ))}
      </div>
      <div className="flex h-6 items-stretch border border-[#6a6e70] bg-[#bcbfc0] text-[#1c1c1c]">
        <div className="flex w-[50px] items-center bg-gradient-to-b from-[#6e7173] to-[#4a4d4f] pl-0.5">
          <Svg w={6} h={16}>
            <path d="M1 0v16M5 0v16" stroke="#999" strokeDasharray="1 1" strokeWidth="2" />
          </Svg>
          <span className="ml-[5px]">
            <Svg w={9} h={9}><path d="M1 1l7 7M8 1L1 8" strokeWidth="2" /></Svg>
          </span>
          <span className="ml-2.5">
            <Svg w={13} h={13}>
              <path d="M5 5l7 7" strokeWidth="3" />
              <path d="M1 3l2 3 3-1 0-3-2-1" strokeWidth="2" />
            </Svg>
          </span>
        </div>
        <div className="flex items-center">
          <span className="mx-1 flex h-[13px] w-[15px] items-center justify-center border border-[#7d8590] bg-[#aab0ba]">
            <Svg w={9} h={8}><path d="M1 1l3 3-3 3M5 7h4" stroke="#222" /></Svg>
          </span>
          <Svg w={6} h={3}><path d="M0 0h5L2.500 3z" fill="#555" stroke="none" /></Svg>
          <p className="whitespace-nowrap">
            Specify opposite corner or [<CommandOption hot="F" rest="ence" /> <CommandOption hot="WP" rest="olygon" />{" "}
            <CommandOption hot="CP" rest="olygon" />]:
          </p>
        </div>
        <button type="button" aria-label="Command history" className="mr-1 ml-auto">
          <Svg w={7} h={4}><path d="M0 4h7L3.500 0z" fill="#111" stroke="none" /></Svg>
        </button>
      </div>
    </div>
  );
}

function Canvas() {
  return (
    <main className="relative min-h-[420px] flex-1 overflow-hidden border-r-2 border-[#b4c4da] bg-[#212830]">
      <Drawing />
      <p className="absolute top-1 left-[3px] text-[11px] leading-[18px] text-gray-200">[−][Top][2D Wireframe]</p>
      <div className="absolute top-[9px] right-[11px] flex gap-[9px]">
        <button type="button" aria-label="Minimize drawing"><Svg w={10} h={10}><path d="M0 8h9" stroke="#eee" strokeWidth="2" /></Svg></button>
        <button type="button" aria-label="Restore drawing">
          <Svg w={10} h={10}><path d="M1 3.500h5.500V9H1z" stroke="#eee" strokeWidth="1.500" /><path d="M3 1h6v6" stroke="#eee" /></Svg>
        </button>
        <button type="button" aria-label="Close drawing window"><Svg w={9} h={10}><path d="M1 1l7 8M8 1L1 9" stroke="#eee" strokeWidth="2" /></Svg></button>
      </div>
      <ViewCube />
      <NavBar />
      <DynamicInput />
      <CommandLine />
    </main>
  );
}

/* ---------- status bar ---------- */

function StatusGroup({ children }: Kids) {
  return <div className="flex items-center outline outline-1 -outline-offset-1 outline-[#6e6e6e]">{children}</div>;
}

function StatusButton({ label, on, width = "w-[23px]", children }: Kids & { label: string; on?: boolean; width?: string }) {
  return (
    <button
      type="button"
      aria-label={label}
      aria-pressed={on}
      className={`${width} flex h-[21px] items-center justify-center ${on ? "bg-[#5488c0] ring-1 ring-[#75797e] ring-inset" : ""}`}
    >
      {children}
    </button>
  );
}

function StatusBar() {
  const tab = "[clip-path:polygon(0_0,100%_0,calc(100%-8px)_100%,8px_100%)] h-4 shrink-0 px-2.5";
  const compass = "M9 1l2 6 6 9-6-3h-4l-6 3 6-9z";
  return (
    <footer className="flex h-[27px] bg-[#383838] text-[11px] leading-[15px] text-[#b4b4b4]">
      <nav className="flex pt-px pl-[11px]">
        <a href="#model" className={`${tab} bg-gradient-to-b from-[#606060] to-[#8c8c8c] font-bold text-white`}>Model</a>
        <a href="#layout1" className={`${tab} bg-[#555]`}>Layout1</a>
        <a href="#layout2" className={`${tab} bg-[#555]`}>Layout2</a>
        <button type="button" aria-label="New layout" className="ml-1 flex h-4 w-[21px] items-center justify-center rounded-tl-lg rounded-br-lg bg-[#505050]">
          <Svg w={8} h={8}><path d="M4 0v8M0 4h8" strokeWidth="2" /></Svg>
        </button>
      </nav>
      <div className="ml-auto flex bg-[#464646]">
        <StatusGroup>
          <button type="button" className="w-[46px] text-center text-[11px] text-white">MODEL</button>
        </StatusGroup>
        <StatusGroup>
          <StatusButton label="Grid">
            <Svg w={14} h={14}><path d="M3 0v14M7 0v14M11 0v14M0 3h14M0 7h14M0 11h14" /></Svg>
          </StatusButton>
          <StatusButton label="Snap">
            <Svg w={14} h={14}><path d="M1 2h13M1 7h13M1 12h13" strokeDasharray="2 3" strokeWidth="2" /></Svg>
          </StatusButton>
          <StatusButton label="Snap options" width="w-[14px]"><Caret /></StatusButton>
        </StatusGroup>
        <span className="w-[3px]" />
        <StatusGroup>
          <StatusButton label="Ortho">
            <Svg w={16} h={16}><path d="M1.500 1v13.500H16M2 9.500h4.500V14" /></Svg>
          </StatusButton>
          <StatusButton label="Polar tracking" on>
            <Svg w={16} h={16}><path d="M12 4a6 6 0 1 0 2 5M7 9h9M7 9l8-7M12 7v4" stroke="#fff" /></Svg>
          </StatusButton>
          <StatusButton label="Polar options" width="w-[14px]"><Caret /></StatusButton>
          <StatusButton label="Isodraft">
            <Svg w={14} h={16}><path d="M8 1v14" stroke="#6cc47c" /><path d="M1 3l12 10" stroke="#e87878" /></Svg>
          </StatusButton>
          <StatusButton label="Isodraft options" width="w-[14px]"><Caret /></StatusButton>
          <StatusButton label="Snap tracking" on>
            <Svg w={16} h={16}><path d="M15 2L2 13.500h14" stroke="#fff" /><path d="M6 7h4v3H6z" fill="#fff" stroke="none" /></Svg>
          </StatusButton>
          <StatusButton label="Object snap" on>
            <Svg w={16} h={16}><path d="M5 3.500h9.500v11H3.500V6M.5.500h5v5h-5z" stroke="#fff" /></Svg>
          </StatusButton>
          <StatusButton label="Object snap options" width="w-[14px]"><Caret /></StatusButton>
          <StatusButton label="Lineweight" on>
            <Svg w={16} h={14}><path d="M0 1.500h7M9 1.500h7M0 5.500h9M0 9.500h16M0 12.500h16" stroke="#fff" strokeWidth="2" /></Svg>
          </StatusButton>
        </StatusGroup>
        <span className="w-[2px]" />
        <StatusGroup>
          <StatusButton label="Annotation visibility" on>
            <Svg><path d={compass} fill="#fff" stroke="none" /><circle cx="14" cy="5" r="2" stroke="#fff" /></Svg>
          </StatusButton>
          <StatusButton label="Auto scale">
            <Svg><path d={compass} fill="#c8c8c8" stroke="none" /><path d="M15 1l-2 4h4l-3 4" /></Svg>
          </StatusButton>
          <StatusButton label="Annotation scale">
            <Svg><path d={compass} fill="#d0d0d0" stroke="none" /></Svg>
          </StatusButton>
          <button type="button" className="flex w-[34px] items-center justify-center gap-1 text-[10px] text-white">
            1:1 <Caret />
          </button>
        </StatusGroup>
        <StatusGroup>
          <StatusButton label="Workspace">
            <Svg w={16} h={16}>
              <circle cx="8" cy="8" r="4" strokeWidth="3" />
              <circle cx="8" cy="8" r="6.500" strokeDasharray="3 2" strokeWidth="2" />
            </Svg>
          </StatusButton>
          <StatusButton label="Workspace options" width="w-[14px]"><Caret /></StatusButton>
        </StatusGroup>
        <StatusGroup>
          <StatusButton label="Annotation monitor"><Svg w={16} h={16}><path d="M8 1v14M1 8h14" strokeWidth="2" /></Svg></StatusButton>
        </StatusGroup>
        <StatusGroup>
          <StatusButton label="Isolate objects" width="w-[25px]">
            <Svg w={16} h={16}><path d="M1 1h5v5H1zM7 10l4 5H3z" /><circle cx="12.500" cy="6.500" r="2.500" /></Svg>
          </StatusButton>
        </StatusGroup>
        <StatusGroup>
          <StatusButton label="Hardware acceleration" width="w-[25px]">
            <Svg w={16} h={16}>
              <path d="M2 1h7l3 3v8H2z" fill="#7cc6f2" stroke="#ddd" />
              <path d="M3 6h4v5H3z" fill="#f2cd7e" stroke="none" />
              <path d="M8 11l3 3 4-5" stroke="#38b04a" strokeWidth="2" />
            </Svg>
          </StatusButton>
        </StatusGroup>
        <StatusGroup>
          <StatusButton label="Clean screen" width="w-[24px]">
            <Svg w={16} h={12}><path d="M.5.500h15v11H.5zM3 9l3-3M3 6.500V9h2.500M13 3l-3 3M13 5.500V3h-2.500" /></Svg>
          </StatusButton>
          <StatusButton label="Customization" width="w-[18px]">
            <Svg w={15} h={14}><path d="M0 2h15M0 7h15M0 12h15" strokeWidth="2" /></Svg>
          </StatusButton>
        </StatusGroup>
      </div>
    </footer>
  );
}

/* ---------- windows taskbar ---------- */

function TaskButton({ label, open, active, children }: Kids & { label: string; open?: boolean; active?: boolean }) {
  return (
    <button
      type="button"
      aria-label={label}
      className={`flex w-[46px] items-center justify-center border-b-2 px-1 ${open ? "border-[#76b9ed]" : "border-transparent"} ${active ? "bg-[#4b536b]" : ""}`}
    >
      {children}
    </button>
  );
}

function Chrome() {
  return (
    <Svg w={24} h={24}>
      <g stroke="none">
        <circle cx="11" cy="11" r="10" fill="#34a853" />
        <path d="M11 1a10 10 0 0 1 9 5.500H11L7 13 2.300 6A10 10 0 0 1 11 1z" fill="#ea4335" />
        <path d="M20 6.500A10 10 0 0 1 11 21l5-9-1-5.500z" fill="#fbbc05" />
        <circle cx="11" cy="11" r="4.800" fill="#fff" />
        <circle cx="11" cy="11" r="3.800" fill="#4285f4" />
        <circle cx="17.500" cy="17" r="6" fill="#c9c6c4" />
        <circle cx="17.500" cy="15.500" r="2.500" fill="#5a4640" />
        <path d="M13.500 21c0-4 8-4 8 0a6 6 0 0 1-8 0z" fill="#77716e" />
      </g>
    </Svg>
  );
}

function Taskbar() {
  return (
    <div className="flex h-[38px] bg-[#222a42] text-white">
      <button type="button" aria-label="Start" className="flex w-[45px] items-center justify-center">
        <Svg w={16} h={16}>
          <path d="M0 2l7-1v6.500H0zM8 1l8-1v7.500H8zM0 8.500h7V15l-7-1zM8 8.500h8V16l-8-1z" fill="#fff" stroke="none" />
        </Svg>
      </button>
      <label className="flex w-[322px] items-center gap-2.5 border-t border-[#d0d0d0] bg-[#f2f2f2] pl-[11px]">
        <Svg w={16} h={16}>
          <circle cx="10" cy="6" r="5" stroke="#222" strokeWidth="1.300" />
          <path d="M6.500 9.500L1 15" stroke="#222" strokeWidth="1.300" />
        </Svg>
        <input
          aria-label="Windows search"
          placeholder="Type here to search"
          className="min-w-0 flex-1 bg-transparent text-[13px] text-black outline-none placeholder:text-[#444]"
        />
      </label>
      <TaskButton label="Cortana"><Svg w={16} h={16}><circle cx="8" cy="8" r="6" stroke="#fff" strokeWidth="2" /></Svg></TaskButton>
      <TaskButton label="Task view">
        <Svg w={17} h={16}><path d="M1.500 0v3h9V0M1.500 5.500h9v5h-9zM1.500 16v-3h9v3M14.500 0v16" stroke="#fff" strokeWidth="1.300" /><path d="M13 4h3v3h-3z" fill="#fff" stroke="none" /></Svg>
      </TaskButton>
      <TaskButton label="Sticky Notes">
        <Svg w={21} h={21}><path d="M0 0h21v11L11 21H0z" fill="#ffd800" stroke="none" /><path d="M11 21V11h10v10z" fill="#3a3420" stroke="none" /><path d="M11 11h9l-9 9z" fill="#8a7608" stroke="none" /></Svg>
      </TaskButton>
      <TaskButton label="File Explorer" open>
        <Svg w={20} h={18}>
          <g stroke="none">
            <path d="M0 1h7l2 2h11v13H0z" fill="#f0b73c" />
            <path d="M0 5h20v11H0z" fill="#fbd978" />
            <path d="M4 17v-6l2-2h8l2 2v6h-4v-4H8v4z" fill="#3f97cf" />
          </g>
        </Svg>
      </TaskButton>
      <TaskButton label="Chrome" open><Chrome /></TaskButton>
      <TaskButton label="Microsoft Store">
        <Svg w={22} h={24}>
          <path d="M6.500 7V2.500h9V7" stroke="#fff" strokeWidth="1.500" />
          <path d="M0 6h22v16H0z" fill="#fff" stroke="none" />
          <path d="M6 10h4v4H6z" fill="#e8502c" stroke="none" />
          <path d="M11 10h4v4h-4z" fill="#7fb71a" stroke="none" />
          <path d="M6 15h4v4H6z" fill="#1f9fe8" stroke="none" />
          <path d="M11 15h4v4h-4z" fill="#fbb818" stroke="none" />
        </Svg>
      </TaskButton>
      <TaskButton label="Edge">
        <Svg w={24} h={24}>
          <g stroke="none">
            <circle cx="12" cy="12" r="11" fill="#1586d8" />
            <path d="M1 12C2-3 23-2 23 11c0 5-6 6-9 4 2-3 1-7-3-7-5 0-8 2-10 4z" fill="#36c4b0" />
            <path d="M13 1c6 0 10 5 10 10 0 4-4 5-7 5 2-6-1-10-3-15z" fill="#5fd65e" />
            <path d="M8 13c0 6 6 9 12 6-4 6-14 4-16-2-1-5 3-9 7-9-2 1-3 3-3 5z" fill="#0d4f9e" />
          </g>
        </Svg>
      </TaskButton>
      <TaskButton label="Chrome profile" open><Chrome /></TaskButton>
      <TaskButton label="AutoCAD" open active>
        <span className="flex h-[23px] w-[23px] items-center justify-center bg-[#f6e6e2]"><AcadLogo size={19} /></span>
      </TaskButton>
      <TaskButton label="Bandicam" open>
        <Svg w={22} h={22}><circle cx="11" cy="11" r="9.500" fill="#000" stroke="#ddd" strokeWidth="1.500" /><circle cx="11" cy="11" r="6" fill="#ee2424" stroke="none" /></Svg>
      </TaskButton>
      <div className="ml-auto flex items-center">
        <button type="button" className="flex items-center gap-2 text-[13px]">
          <Svg w={20} h={20}>
            <circle cx="9" cy="8" r="7" fill="#f8b834" stroke="none" />
            <path d="M4 18a4 4 0 0 1 0-7 5 5 0 0 1 9-1 4 4 0 0 1 3 8z" fill="#cfe6f8" stroke="none" />
          </Svg>
          32°C
        </button>
        <div className="ml-4 flex items-center gap-1.5">
          <Svg w={11} h={7}><path d="M0 6l5.500-5L11 6" stroke="#fff" strokeWidth="1.300" /></Svg>
          <span className="ml-1">
            <Svg w={17} h={14}><path d="M4 12a3 3 0 0 1 0-6 5 5 0 0 1 9 0 3 3 0 0 1 1 6z" fill="#8a8f9c" stroke="none" /><path d="M2 1l13 12" stroke="#fff" /></Svg>
          </span>
          <Svg w={14} h={14}>
            <path d="M1 13A12 12 0 0 1 13 1M4 13a9 9 0 0 1 9-9M7 13a6 6 0 0 1 6-6" stroke="#e0e0e0" />
            <circle cx="12" cy="12" r="1.500" fill="#fff" stroke="none" />
          </Svg>
          <Svg w={17} h={12}><path d="M5.500 3.500h10v7h-12V8" stroke="#fff" strokeWidth="1.500" /><path d="M6 5h8v4H6z" fill="#fff" stroke="none" /><path d="M1 1v4h3V1" stroke="#fff" /></Svg>
          <Svg w={17} h={14}><path d="M1 5h3l4-4v12L4 9H1zM10 4c2 2 2 4 0 6M12 2c3 3 3 7 0 10M14 1c4 4 4 8 0 12" stroke="#fff" /></Svg>
        </div>
        <p className="ml-2 w-[50px] text-center text-[11px] leading-4 whitespace-nowrap">
          11:47 AM
          <br />
          9/23/2021
        </p>
        <button type="button" aria-label="Notifications" className="mr-[18px] ml-4">
          <Svg w={16} h={16}><path d="M.7 1h14.600v11H11v3l-3-3H.7z" stroke="#fff" strokeWidth="1.300" /></Svg>
        </button>
      </div>
    </div>
  );
}

export default function App() {
  return (
    <div className="flex min-h-screen flex-col overflow-hidden bg-black px-[3px] font-['Open_Sans',sans-serif]">
      <TitleBar />
      <Ribbon />
      <FileTabs />
      <Canvas />
      <StatusBar />
      <Taskbar />
    </div>
  );
}
